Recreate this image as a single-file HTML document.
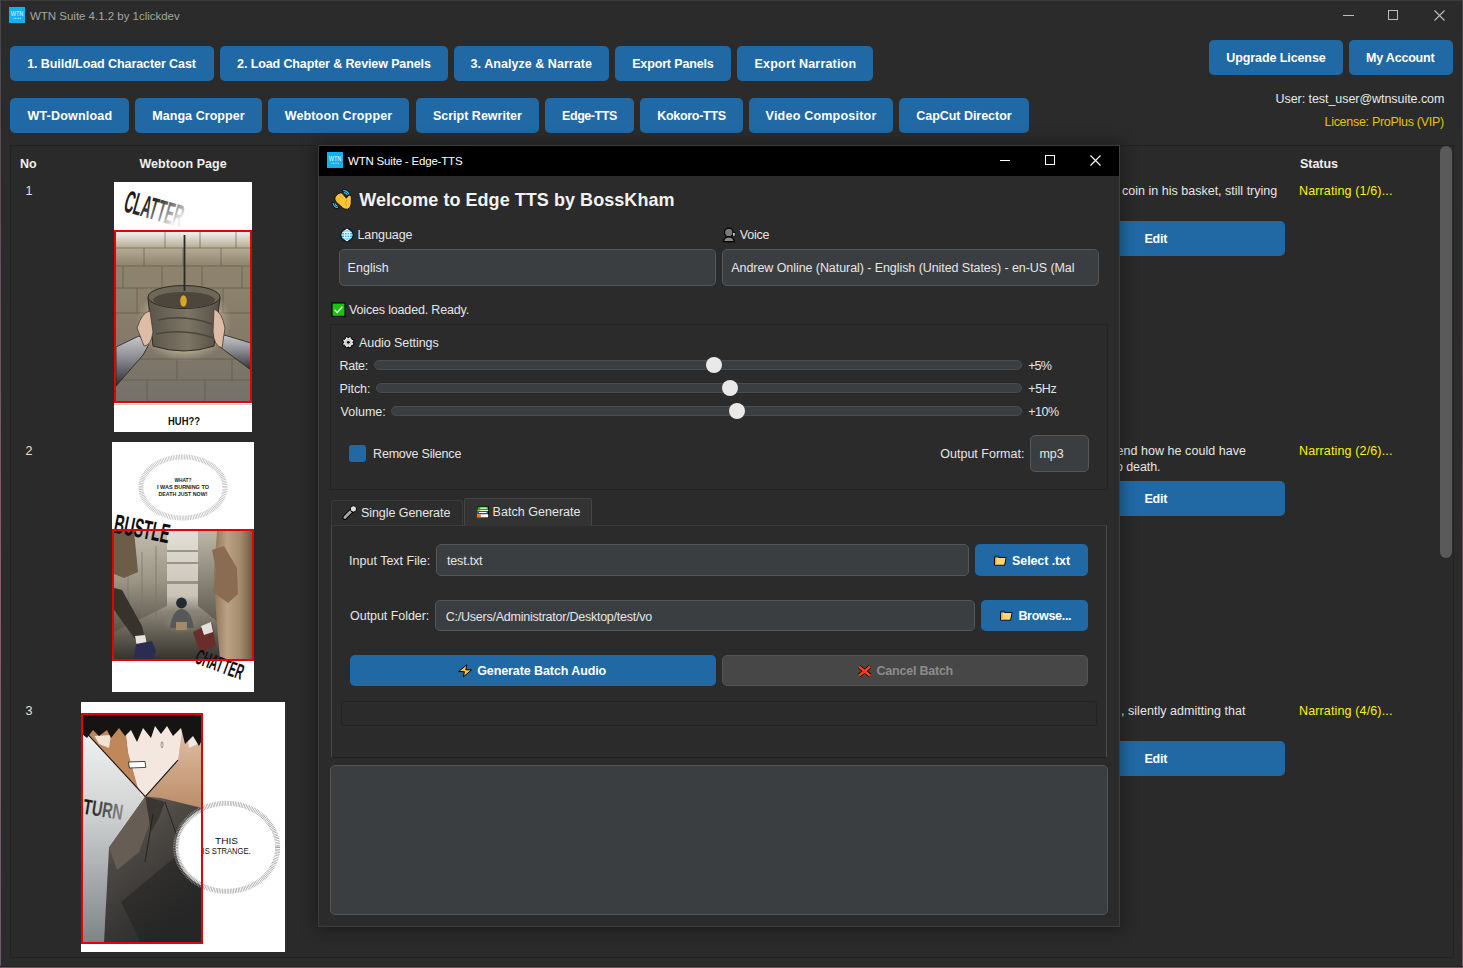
<!DOCTYPE html>
<html><head><meta charset="utf-8"><title>WTN Suite</title>
<style>
html,body{margin:0;padding:0;}
body{width:1463px;height:968px;overflow:hidden;position:relative;background:#2b2b2b;font-family:"Liberation Sans",sans-serif;}
.a{position:absolute;box-sizing:border-box;}
.btn{position:absolute;box-sizing:border-box;background:#2069a5;border-radius:5px;}
.inp{position:absolute;box-sizing:border-box;background:#3b3e41;border:1px solid #54575a;border-radius:5px;}
</style></head><body>
<div class="a" style="left:0;top:0;width:1463px;height:1px;background:#3a3a3a"></div>
<div class="a" style="left:0;top:0;width:1px;height:968px;background:linear-gradient(#45444a,#6a5060 30%,#905c6e 60%,#6a5a6a)"></div>
<div class="a" style="left:1462px;top:0;width:1px;height:968px;background:linear-gradient(#45444a,#5a4a55 40%,#7a5a6a)"></div>
<div class="a" style="left:0;top:966px;width:1463px;height:1px;background:#232323"></div><div class="a" style="left:0;top:967px;width:1463px;height:1px;background:#6e5866"></div>
<svg class="a" style="left:9px;top:7px" width="16" height="16"><rect width="16" height="16" fill="#12b1ee"/><text x="8" y="9.2" text-anchor="middle" font-family="Liberation Sans" font-size="6.5" fill="#e8f8ff" textLength="12.5" lengthAdjust="spacingAndGlyphs">WTN</text><path d="M4.5 11.3 H11.8" stroke="#d8f2fc" stroke-width="0.9" stroke-dasharray="0.9 0.7"/></svg>
<div style="position:absolute;top:10.68px;left:30.00px;font:normal 11.5px/11.5px 'Liberation Sans', sans-serif;color:#a4a4a4;white-space:nowrap;letter-spacing:-0.017px;">WTN Suite 4.1.2 by 1clickdev</div>
<div class="a" style="left:1343px;top:15px;width:11px;height:1px;background:#bdbdbd"></div>
<div class="a" style="left:1388px;top:10px;width:10px;height:10px;border:1px solid #bdbdbd"></div>
<svg class="a" style="left:1433px;top:9px" width="13" height="13"><path d="M1.5 1.5 L11.5 11.5 M11.5 1.5 L1.5 11.5" stroke="#bdbdbd" stroke-width="1.1"/></svg>
<div class="btn" style="left:10px;top:46px;width:204px;height:35px"></div>
<div style="position:absolute;top:58.19px;left:27.20px;font:bold 12.5px/12.5px 'Liberation Sans', sans-serif;color:#ffffff;white-space:nowrap;letter-spacing:-0.078px;">1. Build/Load Character Cast</div>
<div class="btn" style="left:220px;top:46px;width:228px;height:35px"></div>
<div style="position:absolute;top:58.19px;left:237.10px;font:bold 12.5px/12.5px 'Liberation Sans', sans-serif;color:#ffffff;white-space:nowrap;letter-spacing:-0.118px;">2. Load Chapter &amp; Review Panels</div>
<div class="btn" style="left:454px;top:46px;width:155px;height:35px"></div>
<div style="position:absolute;top:58.19px;left:470.60px;font:bold 12.5px/12.5px 'Liberation Sans', sans-serif;color:#ffffff;white-space:nowrap;letter-spacing:0.046px;">3. Analyze &amp; Narrate</div>
<div class="btn" style="left:615px;top:46px;width:116px;height:35px"></div>
<div style="position:absolute;top:58.19px;left:632.20px;font:bold 12.5px/12.5px 'Liberation Sans', sans-serif;color:#ffffff;white-space:nowrap;letter-spacing:-0.151px;">Export Panels</div>
<div class="btn" style="left:737px;top:46px;width:136px;height:35px"></div>
<div style="position:absolute;top:58.19px;left:754.55px;font:bold 12.5px/12.5px 'Liberation Sans', sans-serif;color:#ffffff;white-space:nowrap;letter-spacing:0.194px;">Export Narration</div>
<div class="btn" style="left:10px;top:98px;width:119px;height:35px"></div>
<div style="position:absolute;top:110.19px;left:27.45px;font:bold 12.5px/12.5px 'Liberation Sans', sans-serif;color:#ffffff;white-space:nowrap;letter-spacing:0.211px;">WT-Download</div>
<div class="btn" style="left:135px;top:98px;width:127px;height:35px"></div>
<div style="position:absolute;top:110.19px;left:152.20px;font:bold 12.5px/12.5px 'Liberation Sans', sans-serif;color:#ffffff;white-space:nowrap;letter-spacing:0.066px;">Manga Cropper</div>
<div class="btn" style="left:268px;top:98px;width:141px;height:35px"></div>
<div style="position:absolute;top:110.19px;left:284.70px;font:bold 12.5px/12.5px 'Liberation Sans', sans-serif;color:#ffffff;white-space:nowrap;letter-spacing:0.153px;">Webtoon Cropper</div>
<div class="btn" style="left:416px;top:98px;width:123px;height:35px"></div>
<div style="position:absolute;top:110.19px;left:432.95px;font:bold 12.5px/12.5px 'Liberation Sans', sans-serif;color:#ffffff;white-space:nowrap;letter-spacing:0.003px;">Script Rewriter</div>
<div class="btn" style="left:545px;top:98px;width:89px;height:35px"></div>
<div style="position:absolute;top:110.19px;left:562.05px;font:bold 12.5px/12.5px 'Liberation Sans', sans-serif;color:#ffffff;white-space:nowrap;letter-spacing:-0.442px;">Edge-TTS</div>
<div class="btn" style="left:640px;top:98px;width:103px;height:35px"></div>
<div style="position:absolute;top:110.19px;left:657.25px;font:bold 12.5px/12.5px 'Liberation Sans', sans-serif;color:#ffffff;white-space:nowrap;letter-spacing:-0.298px;">Kokoro-TTS</div>
<div class="btn" style="left:749px;top:98px;width:144px;height:35px"></div>
<div style="position:absolute;top:110.19px;left:765.60px;font:bold 12.5px/12.5px 'Liberation Sans', sans-serif;color:#ffffff;white-space:nowrap;letter-spacing:0.217px;">Video Compositor</div>
<div class="btn" style="left:899px;top:98px;width:130px;height:35px"></div>
<div style="position:absolute;top:110.19px;left:916.25px;font:bold 12.5px/12.5px 'Liberation Sans', sans-serif;color:#ffffff;white-space:nowrap;letter-spacing:-0.034px;">CapCut Director</div>
<div class="btn" style="left:1209px;top:40px;width:134px;height:35px"></div>
<div style="position:absolute;top:52.19px;left:1226.20px;font:bold 12.5px/12.5px 'Liberation Sans', sans-serif;color:#ffffff;white-space:nowrap;letter-spacing:-0.084px;">Upgrade License</div>
<div class="btn" style="left:1349px;top:40px;width:104px;height:35px"></div>
<div style="position:absolute;top:52.19px;left:1366.10px;font:bold 12.5px/12.5px 'Liberation Sans', sans-serif;color:#ffffff;white-space:nowrap;letter-spacing:-0.208px;">My Account</div>
<div style="position:absolute;top:93.09px;left:1275.50px;font:normal 12.5px/12.5px 'Liberation Sans', sans-serif;color:#e8e8e8;white-space:nowrap;letter-spacing:-0.055px;">User: test_user@wtnsuite.com</div>
<div style="position:absolute;top:116.39px;left:1324.50px;font:normal 12.5px/12.5px 'Liberation Sans', sans-serif;color:#e8c100;white-space:nowrap;letter-spacing:-0.290px;">License: ProPlus (VIP)</div>
<div class="a" style="left:10px;top:145px;width:1444px;height:813px;background:#2a2a2a;border:1px solid #222"></div>
<div style="position:absolute;top:158.19px;left:20.00px;font:bold 12.5px/12.5px 'Liberation Sans', sans-serif;color:#f0f0f0;white-space:nowrap;letter-spacing:0.073px;">No</div>
<div style="position:absolute;top:158.19px;left:139.40px;font:bold 12.5px/12.5px 'Liberation Sans', sans-serif;color:#f0f0f0;white-space:nowrap;letter-spacing:0.070px;">Webtoon Page</div>
<div style="position:absolute;top:158.19px;left:1300.00px;font:bold 12.5px/12.5px 'Liberation Sans', sans-serif;color:#f0f0f0;white-space:nowrap;letter-spacing:-0.050px;">Status</div>
<div class="a" style="left:1440px;top:146px;width:12px;height:412px;background:#5a5a5a;border-radius:6px"></div>
<div style="position:absolute;top:185.09px;left:25.50px;font:normal 12.5px/12.5px 'Liberation Sans', sans-serif;color:#e0e0e0;white-space:nowrap;letter-spacing:0.000px;">1</div>
<div style="position:absolute;top:445.09px;left:25.50px;font:normal 12.5px/12.5px 'Liberation Sans', sans-serif;color:#e0e0e0;white-space:nowrap;letter-spacing:0.000px;">2</div>
<div style="position:absolute;top:705.09px;left:25.50px;font:normal 12.5px/12.5px 'Liberation Sans', sans-serif;color:#e0e0e0;white-space:nowrap;letter-spacing:0.000px;">3</div>
<div style="position:absolute;top:185.09px;left:1299.00px;font:normal 12.5px/12.5px 'Liberation Sans', sans-serif;color:#f8f400;white-space:nowrap;letter-spacing:0.139px;">Narrating (1/6)...</div>
<div style="position:absolute;top:445.09px;left:1299.00px;font:normal 12.5px/12.5px 'Liberation Sans', sans-serif;color:#f8f400;white-space:nowrap;letter-spacing:0.139px;">Narrating (2/6)...</div>
<div style="position:absolute;top:705.09px;left:1299.00px;font:normal 12.5px/12.5px 'Liberation Sans', sans-serif;color:#f8f400;white-space:nowrap;letter-spacing:0.139px;">Narrating (4/6)...</div>
<div class="btn" style="left:1028px;top:221px;width:257px;height:35px"></div>
<div style="position:absolute;top:233.39px;left:1144.50px;font:bold 12.5px/12.5px 'Liberation Sans', sans-serif;color:#ffffff;white-space:nowrap;letter-spacing:-0.249px;">Edit</div>
<div class="btn" style="left:1028px;top:481px;width:257px;height:35px"></div>
<div style="position:absolute;top:493.39px;left:1144.50px;font:bold 12.5px/12.5px 'Liberation Sans', sans-serif;color:#ffffff;white-space:nowrap;letter-spacing:-0.249px;">Edit</div>
<div class="btn" style="left:1028px;top:741px;width:257px;height:35px"></div>
<div style="position:absolute;top:753.39px;left:1144.50px;font:bold 12.5px/12.5px 'Liberation Sans', sans-serif;color:#ffffff;white-space:nowrap;letter-spacing:-0.249px;">Edit</div>
<div style="position:absolute;top:185.09px;left:1122.10px;font:normal 12.5px/12.5px 'Liberation Sans', sans-serif;color:#e6e6e6;white-space:nowrap;letter-spacing:0.007px;">coin in his basket, still trying</div>
<div style="position:absolute;top:445.09px;left:1116.50px;font:normal 12.5px/12.5px 'Liberation Sans', sans-serif;color:#e6e6e6;white-space:nowrap;letter-spacing:0.044px;">end how he could have</div>
<div style="position:absolute;top:460.59px;left:1116.00px;font:normal 12.5px/12.5px 'Liberation Sans', sans-serif;color:#e6e6e6;white-space:nowrap;letter-spacing:-0.101px;">o death.</div>
<div style="position:absolute;top:705.09px;left:1121.00px;font:normal 12.5px/12.5px 'Liberation Sans', sans-serif;color:#e6e6e6;white-space:nowrap;letter-spacing:0.033px;">, silently admitting that</div>
<svg class="a" style="left:114px;top:182px" width="138" height="250" viewBox="0 0 138 250">
<defs>
<linearGradient id="st1" x1="0" y1="0" x2="0" y2="1">
<stop offset="0" stop-color="#f2f1ec"/><stop offset="0.09" stop-color="#b8ae98"/><stop offset="0.2" stop-color="#8e846e"/><stop offset="0.6" stop-color="#857b68"/><stop offset="1" stop-color="#74716a"/>
</linearGradient>
<radialGradient id="halo1" cx="0.5" cy="0.5" r="0.5"><stop offset="0.6" stop-color="#e4dcbc" stop-opacity="0.85"/><stop offset="1" stop-color="#b0a486" stop-opacity="0"/></radialGradient>
<linearGradient id="bask1" x1="0" y1="0" x2="1" y2="0"><stop offset="0" stop-color="#5a544a"/><stop offset="0.55" stop-color="#7c7464"/><stop offset="1" stop-color="#544f46"/></linearGradient>
<linearGradient id="clat" x1="0" y1="0" x2="1" y2="0.5"><stop offset="0" stop-color="#0c0c0c"/><stop offset="0.5" stop-color="#2a2a2a"/><stop offset="0.8" stop-color="#9a9a9a"/><stop offset="1" stop-color="#eee"/></linearGradient>
<linearGradient id="slvL" x1="0" y1="0" x2="0" y2="1"><stop offset="0" stop-color="#c8c8cc"/><stop offset="0.45" stop-color="#8a8a90"/><stop offset="1" stop-color="#2e2e32"/></linearGradient>
</defs>
<rect width="138" height="250" fill="#fff"/>
<g transform="translate(16 2.5) rotate(16)"><text x="0" y="22" font-family="Liberation Sans" font-weight="bold" font-size="25" fill="url(#clat)" textLength="60" lengthAdjust="spacingAndGlyphs" transform="scale(1 1.25)">CLATTER</text></g>
<rect x="0" y="222" width="138" height="1" fill="#c8c8c8"/>
<text x="70" y="243" text-anchor="middle" font-family="Liberation Sans" font-weight="bold" font-size="10.5" fill="#111" textLength="32" lengthAdjust="spacingAndGlyphs">HUH??</text>
<rect x="2" y="50" width="134" height="170" fill="url(#st1)"/>
<g stroke="#5a5446" stroke-width="0.9" opacity="0.65" fill="none">
<path d="M2 66 H136 M2 84 H136 M2 106 H136 M2 131 H136 M2 177 H136 M2 198 H136"/>
<path d="M51 50 V66 M86 50 V66 M122 50 V66 M30 66 V84 M69 66 V84 M107 66 V84 M9 84 V106 M48 84 V106 M88 84 V106 M128 84 V106 M23 106 V131 M109 106 V131 M63 177 V198 M118 177 V198 M33 198 V219 M91 198 V219"/>
</g>
<ellipse cx="70" cy="140" rx="48" ry="40" fill="url(#halo1)"/>
<path d="M34 116 L39 164 Q70 174 100 164 L106 116 Z" fill="url(#bask1)" stroke="#2e2a24" stroke-width="1"/>
<ellipse cx="70" cy="115" rx="36" ry="11.5" fill="#6e6758" stroke="#2e2a24" stroke-width="1"/>
<ellipse cx="70" cy="118" rx="31" ry="8" fill="#4c463c"/>
<path d="M44 138 Q70 132 98 142 M42 152 Q70 146 100 156" stroke="#4a463c" stroke-width="1.4" fill="none"/>
<rect x="69.6" y="53" width="1.8" height="56" fill="#2a2a2a"/>
<ellipse cx="69.5" cy="119" rx="3.6" ry="6" fill="#d6a62c" stroke="#5a4410" stroke-width="0.6"/>
<path d="M2 165 L25 154 L35 162 L29 173 L2 204 Z" fill="url(#slvL)" stroke="#222" stroke-width="0.8"/>
<path d="M23 146 Q28 130 36 129 L39 150 Q37 164 30 164 Z" fill="#dcbca4" stroke="#4a3a30" stroke-width="0.8"/>
<path d="M137 161 L110 153 L106 165 L137 188 Z" fill="url(#slvL)" stroke="#222" stroke-width="0.8"/>
<path d="M100 127 Q108 130 111 146 L108 166 Q100 164 99 150 Z" fill="#dcbca4" stroke="#4a3a30" stroke-width="0.8"/>
</svg>
<div class="a" style="left:114px;top:230px;width:138px;height:173px;border:2px solid #e80000"></div>
<svg class="a" style="left:112px;top:442px" width="142" height="250" viewBox="0 0 142 250">
<defs>
<linearGradient id="fog2" x1="0" y1="0" x2="0" y2="1"><stop offset="0" stop-color="#e2dfd6"/><stop offset="0.5" stop-color="#c8c3b6"/><stop offset="0.62" stop-color="#8a8578"/><stop offset="1" stop-color="#34322c"/></linearGradient>
<linearGradient id="wallL" x1="0" y1="0" x2="0" y2="1"><stop offset="0" stop-color="#c2bcae"/><stop offset="0.5" stop-color="#9a9484"/><stop offset="1" stop-color="#56524a"/></linearGradient>
<linearGradient id="wallR" x1="0" y1="0" x2="0" y2="1"><stop offset="0" stop-color="#bdb7a8"/><stop offset="1" stop-color="#5e5a50"/></linearGradient>
<linearGradient id="cloak" x1="0" y1="0" x2="1" y2="0"><stop offset="0" stop-color="#8e7558"/><stop offset="0.35" stop-color="#bca284"/><stop offset="0.7" stop-color="#a48a6c"/><stop offset="1" stop-color="#6e5c48"/></linearGradient>
<radialGradient id="glow2" cx="0.5" cy="0.4" r="0.5"><stop offset="0" stop-color="#8c8676" stop-opacity="0.9"/><stop offset="1" stop-color="#8c8676" stop-opacity="0"/></radialGradient>
</defs>
<rect width="142" height="250" fill="#fff"/>
<ellipse cx="71" cy="45.5" rx="42" ry="30.5" fill="none" stroke="#a8a8a8" stroke-width="5" stroke-dasharray="0.7 0.9" opacity="0.8"/>
<g font-family="Liberation Sans" font-weight="bold" font-size="6.2" fill="#222" text-anchor="middle">
<text x="71" y="39.5" textLength="17" lengthAdjust="spacingAndGlyphs">WHAT?</text><text x="71" y="46.8" textLength="52" lengthAdjust="spacingAndGlyphs">I WAS BURNING TO</text><text x="71" y="54.1" textLength="49" lengthAdjust="spacingAndGlyphs">DEATH JUST NOW!</text></g>
<rect x="2" y="89" width="138" height="129" fill="url(#fog2)"/>
<path d="M2 89 L55 89 L55 164 L2 190 Z" fill="url(#wallL)"/>
<path d="M86 89 L106 89 L106 180 L86 164 Z" fill="url(#wallR)"/>
<path d="M55 108 H86 V110 H55 Z M55 120 H86 V122 H55 Z M55 139 H86 V142 H55 Z" fill="#8a8474" opacity="0.8"/>
<path d="M30 110 V186 M44 104 V176 M16 112 V190" stroke="#7a7466" stroke-width="1.2" opacity="0.6"/>
<ellipse cx="70" cy="182" rx="20" ry="12" fill="url(#glow2)"/>
<path d="M2 89 L22 89 L26 130 L12 136 L2 132 Z" fill="#6c5c48"/>
<path d="M2 146 L10 148 L30 184 L33 197 L25 200 L2 168 Z" fill="#37322b"/>
<path d="M23 194 L33 193 L35 203 L25 205 Z" fill="#e8e4dc"/>
<path d="M24 202 L40 199 L44 210 L40 217 L22 217 Z" fill="#2a2c50"/>
<path d="M105 89 L140 89 L140 218 L108 218 L104 170 L102 130 Z" fill="url(#cloak)"/>
<path d="M100 108 L112 104 L125 126 L126 152 L116 161 L101 150 L104 128 Z" fill="#8a6c52"/>
<path d="M81 190 L100 181 L104 204 L88 211 Z" fill="#6a2e2a"/>
<path d="M89 184 L99 180 L101 190 L92 193 Z" fill="#e4e0da"/>
<circle cx="69.5" cy="161" r="5.4" fill="#262a34"/>
<path d="M58 186 Q60 168 69.5 167 Q79 168 82 186 Z" fill="#56585c"/>
<rect x="64" y="180" width="11" height="8" fill="#a08a68"/>
<g transform="translate(6 64) rotate(11)"><text x="0" y="20" font-family="Liberation Sans" font-weight="bold" font-size="20" fill="#0e0e0e" textLength="56" lengthAdjust="spacingAndGlyphs" transform="scale(1 1.35)">BUSTLE</text></g>
<g transform="translate(90 198) rotate(20)"><text x="0" y="18" font-family="Liberation Sans" font-weight="bold" font-size="16" fill="#111" textLength="50" lengthAdjust="spacingAndGlyphs" transform="scale(1 1.35)">CHATTER</text></g>
</svg>
<div class="a" style="left:112px;top:529px;width:142px;height:132px;border:2px solid #e80000"></div>
<svg class="a" style="left:81px;top:702px" width="204" height="250" viewBox="0 0 204 250">
<defs>
<linearGradient id="bg3" x1="0" y1="0" x2="0" y2="1"><stop offset="0" stop-color="#f8f8f8"/><stop offset="0.4" stop-color="#d4d6d6"/><stop offset="1" stop-color="#7e8386"/></linearGradient>
<linearGradient id="shirt3" x1="0" y1="0" x2="0.5" y2="1"><stop offset="0" stop-color="#70675c"/><stop offset="0.4" stop-color="#4c4844"/><stop offset="1" stop-color="#2c2c2c"/></linearGradient>
<radialGradient id="bub3" cx="0.5" cy="0.5" r="0.5"><stop offset="0.8" stop-color="#fff"/><stop offset="0.9" stop-color="#bdbdbd"/><stop offset="0.97" stop-color="#e6e6e6"/><stop offset="1" stop-color="#fff"/></radialGradient>
<linearGradient id="turn" x1="0" y1="0" x2="1" y2="0"><stop offset="0" stop-color="#111"/><stop offset="1" stop-color="#888"/></linearGradient>
<linearGradient id="neck3" x1="0" y1="0" x2="0" y2="1"><stop offset="0" stop-color="#e8c8b0"/><stop offset="1" stop-color="#b88a66"/></linearGradient>
</defs>
<rect width="204" height="250" fill="#fff"/>
<rect x="1" y="11" width="120" height="231" fill="url(#bg3)"/>
<path d="M58 12 L121 12 L121 112 L92 104 L64.3 94.6 Z" fill="url(#neck3)"/>
<path d="M104 14 L121 14 L121 40 L108 46 Z" fill="#f0e8e2"/>
<path d="M1.4 22 L44 22 L47.4 51 L59.4 94.6 L64.3 94.6 L6.3 31.8 L1.4 30 Z" fill="#bf875a"/>
<path d="M44 22 L102 22 L97 58 L64.3 94.6 L59.4 94.6 L47.4 51 Z" fill="#f3e7df"/>
<path d="M13.5 34 L30 33 L28 46 L18 42 Z" fill="#f2e2d4"/>
<path d="M6.3 31.8 L64.3 94.6 L97 58" stroke="#141414" stroke-width="1.1" fill="none"/>
<path d="M1 11 L121 11 L121 38 L118 44 L112 34 L104 42 L100 26 L92 34 L86 24 L80 32 L74 24 L70 36 L62 26 L56 40 L50 28 L44 34 L38 26 L30 36 L26 28 L18 34 L12 28 L6 36 L1 32 Z" fill="#161412"/>
<path d="M23 241 L28 145.4 L64.3 94.6 L80 96 L121 106 L121 241 Z" fill="url(#shirt3)"/>
<path d="M28 145.4 L64.3 94.6 L72 112 L58 150 L36 168 Z" fill="#665e54"/>
<path d="M64.3 94.6 L70 130 L78 116 L84 100 Z" fill="#3a3632"/>
<path d="M40 200 L100 150 L121 160 L121 241 L60 241 Z" fill="#202020" opacity="0.5"/>
<path d="M72 112 L64 160 M84 100 L98 140" stroke="#1a1a1a" stroke-width="0.8" fill="none"/>
<path d="M47.4 60 L64 59.4 L64.8 65.4 L48.4 66 Z" fill="#fff" stroke="#1e1e1e" stroke-width="0.8"/>
<path d="M80.5 40 Q79 44 81 46 Q83 44 81.6 40 Z" fill="none" stroke="#777" stroke-width="0.7"/>
<g transform="translate(5 88) rotate(9)"><text x="0" y="20" font-family="Liberation Sans" font-weight="bold" font-size="18" fill="url(#turn)" textLength="40" lengthAdjust="spacingAndGlyphs" transform="scale(1 1.2)">TURN</text></g>
<ellipse cx="145.6" cy="145.3" rx="51" ry="44" fill="#fff" stroke="#9a9a9a" stroke-width="5" stroke-dasharray="0.7 0.9" opacity="0.9"/><ellipse cx="145.6" cy="145.3" rx="47.5" ry="40.5" fill="#fff"/>
<g font-family="Liberation Sans" font-size="8.6" fill="#111" text-anchor="middle"><text x="145.6" y="141.6" textLength="23" lengthAdjust="spacingAndGlyphs">THIS</text><text x="145.6" y="152.4" textLength="48" lengthAdjust="spacingAndGlyphs">IS STRANGE.</text></g>
</svg>
<div class="a" style="left:81px;top:713px;width:122px;height:231px;border:2px solid #e80000"></div>
<div class="a" style="left:318px;top:145px;width:802px;height:782px;background:#2b2b2b;border:1px solid #3c3c3c;box-shadow:0 0 14px 2px rgba(0,0,0,0.35)"></div>
<div class="a" style="left:319px;top:146px;width:800px;height:30px;background:#000"></div>
<svg class="a" style="left:327px;top:152px" width="16" height="16"><rect width="16" height="16" fill="#12b1ee"/><text x="8" y="9.2" text-anchor="middle" font-family="Liberation Sans" font-size="6.5" fill="#e8f8ff" textLength="12.5" lengthAdjust="spacingAndGlyphs">WTN</text><path d="M4.5 11.3 H11.8" stroke="#d8f2fc" stroke-width="0.9" stroke-dasharray="0.9 0.7"/></svg>
<div style="position:absolute;top:155.78px;left:348.00px;font:normal 11.5px/11.5px 'Liberation Sans', sans-serif;color:#ffffff;white-space:nowrap;letter-spacing:-0.192px;">WTN Suite - Edge-TTS</div>
<div class="a" style="left:1000px;top:160px;width:10px;height:1px;background:#fff"></div>
<div class="a" style="left:1045px;top:155px;width:10px;height:10px;border:1px solid #fff"></div>
<svg class="a" style="left:1089px;top:154px" width="13" height="13"><path d="M1.5 1.5 L11.5 11.5 M11.5 1.5 L1.5 11.5" stroke="#fff" stroke-width="1.1"/></svg>
<div style="position:absolute;top:190.61px;left:359.30px;font:bold 18px/18px 'Liberation Sans', sans-serif;color:#f2f2f2;white-space:nowrap;letter-spacing:0.049px;">Welcome to Edge TTS by BossKham</div>
<div style="position:absolute;top:229.29px;left:357.50px;font:normal 12.5px/12.5px 'Liberation Sans', sans-serif;color:#e6e6e6;white-space:nowrap;letter-spacing:-0.095px;">Language</div>
<div style="position:absolute;top:229.29px;left:739.80px;font:normal 12.5px/12.5px 'Liberation Sans', sans-serif;color:#e6e6e6;white-space:nowrap;letter-spacing:-0.207px;">Voice</div>
<div class="inp" style="left:339px;top:249px;width:377px;height:37px"></div>
<div style="position:absolute;top:262.09px;left:347.60px;font:normal 12.5px/12.5px 'Liberation Sans', sans-serif;color:#e6e6e6;white-space:nowrap;letter-spacing:0.026px;">English</div>
<div class="inp" style="left:722px;top:249px;width:377px;height:37px"></div>
<div style="position:absolute;top:262.09px;left:731.30px;font:normal 12.5px/12.5px 'Liberation Sans', sans-serif;color:#e6e6e6;white-space:nowrap;letter-spacing:-0.068px;">Andrew Online (Natural) - English (United States) - en-US (Mal</div>
<div style="position:absolute;top:304.09px;left:349.00px;font:normal 12.5px/12.5px 'Liberation Sans', sans-serif;color:#e6e6e6;white-space:nowrap;letter-spacing:-0.164px;">Voices loaded. Ready.</div>
<div class="a" style="left:330px;top:324px;width:778px;height:166px;border:1px solid #232323"></div>
<div style="position:absolute;top:337.29px;left:359.10px;font:normal 12.5px/12.5px 'Liberation Sans', sans-serif;color:#e6e6e6;white-space:nowrap;letter-spacing:-0.081px;">Audio Settings</div>
<div style="position:absolute;top:359.59px;left:339.50px;font:normal 12.5px/12.5px 'Liberation Sans', sans-serif;color:#e6e6e6;white-space:nowrap;letter-spacing:-0.276px;">Rate:</div>
<div class="a" style="left:374px;top:360px;width:648px;height:10px;background:#3b3e41;border:1px solid #4a4d50;border-radius:5px"></div>
<div class="a" style="left:706px;top:357px;width:16px;height:16px;background:#e9e9e9;border-radius:50%"></div>
<div style="position:absolute;top:359.59px;left:1028.20px;font:normal 12.5px/12.5px 'Liberation Sans', sans-serif;color:#e6e6e6;white-space:nowrap;letter-spacing:-0.876px;">+5%</div>
<div style="position:absolute;top:382.59px;left:339.50px;font:normal 12.5px/12.5px 'Liberation Sans', sans-serif;color:#e6e6e6;white-space:nowrap;letter-spacing:-0.058px;">Pitch:</div>
<div class="a" style="left:376px;top:383px;width:646px;height:10px;background:#3b3e41;border:1px solid #4a4d50;border-radius:5px"></div>
<div class="a" style="left:721.6px;top:380px;width:16px;height:16px;background:#e9e9e9;border-radius:50%"></div>
<div style="position:absolute;top:382.59px;left:1028.20px;font:normal 12.5px/12.5px 'Liberation Sans', sans-serif;color:#e6e6e6;white-space:nowrap;letter-spacing:-0.293px;">+5Hz</div>
<div style="position:absolute;top:405.59px;left:340.50px;font:normal 12.5px/12.5px 'Liberation Sans', sans-serif;color:#e6e6e6;white-space:nowrap;letter-spacing:0.018px;">Volume:</div>
<div class="a" style="left:391px;top:406px;width:631px;height:10px;background:#3b3e41;border:1px solid #4a4d50;border-radius:5px"></div>
<div class="a" style="left:728.7px;top:403px;width:16px;height:16px;background:#e9e9e9;border-radius:50%"></div>
<div style="position:absolute;top:405.59px;left:1028.20px;font:normal 12.5px/12.5px 'Liberation Sans', sans-serif;color:#e6e6e6;white-space:nowrap;letter-spacing:-0.501px;">+10%</div>
<div class="a" style="left:349px;top:445px;width:17px;height:17px;background:#2069a5;border-radius:3px"></div>
<div style="position:absolute;top:447.99px;left:373.10px;font:normal 12.5px/12.5px 'Liberation Sans', sans-serif;color:#e6e6e6;white-space:nowrap;letter-spacing:-0.213px;">Remove Silence</div>
<div style="position:absolute;top:447.99px;left:940.30px;font:normal 12.5px/12.5px 'Liberation Sans', sans-serif;color:#e6e6e6;white-space:nowrap;letter-spacing:0.001px;">Output Format:</div>
<div class="inp" style="left:1030px;top:435px;width:59px;height:37px"></div>
<div style="position:absolute;top:447.99px;left:1039.40px;font:normal 12.5px/12.5px 'Liberation Sans', sans-serif;color:#e6e6e6;white-space:nowrap;letter-spacing:0.018px;">mp3</div>
<div class="a" style="left:331px;top:525px;width:776px;height:233px;border:1px solid #3a3a3a;border-left-color:#474747;border-right-color:#4a4a4a;border-bottom-color:#1f1f1f"></div>
<div class="a" style="left:331px;top:500px;width:132px;height:25px;background:#2d2d2d;border:1px solid #3a3a3a;border-bottom:none;border-radius:3px 3px 0 0"></div>
<div class="a" style="left:464px;top:498px;width:128px;height:28px;background:#333;border:1px solid #454545;border-bottom:none;border-radius:3px 3px 0 0"></div>
<div style="position:absolute;top:506.99px;left:361.00px;font:normal 12.5px/12.5px 'Liberation Sans', sans-serif;color:#e6e6e6;white-space:nowrap;letter-spacing:-0.070px;">Single Generate</div>
<div style="position:absolute;top:506.49px;left:492.60px;font:normal 12.5px/12.5px 'Liberation Sans', sans-serif;color:#e6e6e6;white-space:nowrap;letter-spacing:0.031px;">Batch Generate</div>
<div style="position:absolute;top:555.39px;left:349.10px;font:normal 12.5px/12.5px 'Liberation Sans', sans-serif;color:#e6e6e6;white-space:nowrap;letter-spacing:-0.001px;">Input Text File:</div>
<div class="inp" style="left:436px;top:544px;width:533px;height:32px"></div>
<div style="position:absolute;top:555.39px;left:447.10px;font:normal 12.5px/12.5px 'Liberation Sans', sans-serif;color:#e6e6e6;white-space:nowrap;letter-spacing:-0.206px;">test.txt</div>
<div class="btn" style="left:975px;top:544px;width:113px;height:32px"></div>
<div style="position:absolute;top:555.09px;left:1012.10px;font:bold 12.5px/12.5px 'Liberation Sans', sans-serif;color:#fff;white-space:nowrap;letter-spacing:-0.109px;">Select .txt</div>
<div style="position:absolute;top:610.39px;left:350.10px;font:normal 12.5px/12.5px 'Liberation Sans', sans-serif;color:#e6e6e6;white-space:nowrap;letter-spacing:-0.056px;">Output Folder:</div>
<div class="inp" style="left:435px;top:600px;width:540px;height:31px"></div>
<div style="position:absolute;top:610.59px;left:445.80px;font:normal 12.5px/12.5px 'Liberation Sans', sans-serif;color:#e6e6e6;white-space:nowrap;letter-spacing:-0.243px;">C:/Users/Administrator/Desktop/test/vo</div>
<div class="btn" style="left:981px;top:600px;width:107px;height:31px"></div>
<div style="position:absolute;top:610.29px;left:1018.40px;font:bold 12.5px/12.5px 'Liberation Sans', sans-serif;color:#fff;white-space:nowrap;letter-spacing:-0.300px;">Browse...</div>
<div class="btn" style="left:350px;top:655px;width:366px;height:31px"></div>
<div style="position:absolute;top:665.19px;left:477.20px;font:bold 12.5px/12.5px 'Liberation Sans', sans-serif;color:#fff;white-space:nowrap;letter-spacing:-0.092px;">Generate Batch Audio</div>
<div class="a" style="left:722px;top:655px;width:366px;height:31px;background:#474747;border:1px solid #555;border-radius:5px"></div>
<div style="position:absolute;top:665.19px;left:876.50px;font:bold 12.5px/12.5px 'Liberation Sans', sans-serif;color:#8c8c8c;white-space:nowrap;letter-spacing:-0.223px;">Cancel Batch</div>
<div class="a" style="left:341px;top:701px;width:756px;height:25px;border:1px solid #222;border-radius:3px"></div>
<div class="inp" style="left:330px;top:765px;width:778px;height:150px;border-color:#555"></div>
<svg class="a" style="left:328px;top:185px;overflow:visible" width="30" height="30" viewBox="0 0 30 30">
<path d="M15.6 5.6 Q19.4 5.8 21 9.2" stroke="#0a0a0a" stroke-width="2.8" fill="none" stroke-linecap="round"/>
<path d="M15.6 5.6 Q19.4 5.8 21 9.2 M16.4 7.6 Q18.4 7.8 19.2 9.4" stroke="#36c4f2" stroke-width="1.1" fill="none" stroke-linecap="round"/>
<path d="M5.2 18.4 Q6 22.2 9.8 22.8" stroke="#0a0a0a" stroke-width="2.8" fill="none" stroke-linecap="round"/>
<path d="M5.2 18.4 Q6 22.2 9.8 22.8 M7.2 18.8 Q7.6 20.6 9.2 21" stroke="#36c4f2" stroke-width="1.1" fill="none" stroke-linecap="round"/>
<path d="M7.1 14.6 Q6.6 12.6 7.6 11.4 Q8.2 9.8 9.6 9.4 Q10.8 8 12.4 7.9 Q13.8 7.8 14.6 8.8 L18.4 13.2 L20 10.8 Q21 9.8 22.2 10.2 Q23.4 11 23.4 13.4 L23.2 19 Q22.8 23.2 19.6 24.2 Q16.8 24.6 14.8 23 L8.2 17 Q7.2 16 7.1 14.6 Z" fill="#fcc43a" stroke="#0a0a0a" stroke-width="0.9"/>
<path d="M10.4 9.4 L15 13.6 M8.2 11.2 L13 15.6 M7.3 13.6 L11.6 17.4" stroke="#e0a01a" stroke-width="0.8" fill="none"/>
<path d="M18.6 14.8 Q16.8 17.6 18.6 21" stroke="#e0a01a" stroke-width="1" fill="none"/>
</svg>
<svg class="a" style="left:340px;top:228px;overflow:visible" width="14" height="14" viewBox="0 0 14 14">
<circle cx="7" cy="7" r="6.2" fill="#2bb8f2" stroke="#0c0c0c" stroke-width="1.1"/>
<path d="M1.5 7 H12.5 M2.4 4.4 H11.6 M2.4 9.6 H11.6 M7 1 V13" stroke="#fff" stroke-width="0.9"/>
<ellipse cx="7" cy="7" rx="2.6" ry="5.8" stroke="#fff" stroke-width="0.9" fill="none"/>
</svg>
<svg class="a" style="left:718px;top:224px;overflow:visible" width="24" height="22" viewBox="0 0 24 22">
<path d="M5.6 17.6 Q6.2 13 10.8 13 Q15.4 13 16.2 17.6 Z" fill="#8a8a8a" stroke="#000" stroke-width="1.2"/>
<circle cx="10.8" cy="8.4" r="4.3" fill="#7a7a7a" stroke="#000" stroke-width="1.2"/>
<rect x="14.6" y="8.6" width="2.6" height="3.6" fill="#cfcfcf" stroke="#000" stroke-width="0.8"/>
</svg>
<svg class="a" style="left:331px;top:302px;overflow:visible" width="15" height="15" viewBox="0 0 15 15">
<rect x="1" y="1" width="13" height="13.4" fill="#16c60c" stroke="#0a0a0a" stroke-width="1.2"/>
<path d="M3.6 7.8 L6.2 10.4 L11.4 4.6" stroke="#fff" stroke-width="1.4" fill="none"/>
</svg>
<svg class="a" style="left:341.5px;top:336.2px;overflow:visible" width="13" height="13" viewBox="0 0 13 13">
<polygon points="10.96,6.91 12.06,7.58 11.28,9.47 10.03,9.16 9.16,10.03 9.47,11.28 7.58,12.06 6.91,10.96 5.69,10.96 5.02,12.06 3.13,11.28 3.44,10.03 2.57,9.16 1.32,9.47 0.54,7.58 1.64,6.91 1.64,5.69 0.54,5.02 1.32,3.13 2.57,3.44 3.44,2.57 3.13,1.32 5.02,0.54 5.69,1.64 6.91,1.64 7.58,0.54 9.47,1.32 9.16,2.57 10.03,3.44 11.28,3.13 12.06,5.02 10.96,5.69" fill="#e8e8e8" stroke="#000" stroke-width="1" stroke-linejoin="round"/>
<circle cx="6.3" cy="6.3" r="2.7" fill="none" stroke="#a0a0a0" stroke-width="0.6"/>
<circle cx="6.3" cy="6.3" r="1.4" fill="#000"/>
</svg>
<svg class="a" style="left:340px;top:500px;overflow:visible" width="24" height="24" viewBox="0 0 24 24">
<path d="M4.8 17.6 L11.4 10.8" stroke="#000" stroke-width="4.8" stroke-linecap="round"/>
<path d="M4.8 17.6 L11.4 10.8" stroke="#a8a8a8" stroke-width="2.8" stroke-linecap="round"/>
<circle cx="13.4" cy="8.9" r="3.2" fill="#dcdcdc" stroke="#000" stroke-width="1"/>
</svg>
<svg class="a" style="left:476px;top:505px;overflow:visible" width="14" height="14" viewBox="0 0 14 14">
<rect x="1.2" y="1.2" width="11.6" height="11.8" fill="#000"/>
<rect x="1.6" y="1.8" width="10.4" height="2.8" fill="#16b814"/>
<rect x="4.2" y="2.6" width="6.6" height="1.1" fill="#fff"/>
<rect x="1.6" y="4.8" width="10.6" height="1.2" fill="#f7f0e0"/>
<rect x="1.6" y="4.8" width="2.6" height="1.2" fill="#f2a800"/>
<rect x="1" y="6.2" width="10.8" height="2.6" fill="#1a6fc8"/>
<rect x="3" y="7" width="7.6" height="1" fill="#fff"/>
<rect x="1.2" y="9.2" width="11" height="3.2" fill="#fff"/>
<rect x="1.2" y="9.2" width="3.6" height="3.2" fill="#ff6a10"/>
</svg>
<svg class="a" style="left:993px;top:555px;overflow:visible" width="15" height="12" viewBox="0 0 15 12">
<path d="M1.2 2 Q1.4 0.8 2.6 0.8 L5.4 0.8 L6.6 2.2 L13.6 2.2 L12 10.6 L1.2 10.6 Z" fill="#000"/>
<rect x="2.2" y="1.6" width="3.4" height="1.2" fill="#5ab4f0"/>
<path d="M2 3 L12.6 3 L11.2 9.8 L2 9.8 Z" fill="#fdd67a"/>
<rect x="2" y="3" width="1.6" height="6.8" fill="#f2a800" opacity="0.8"/>
</svg>
<svg class="a" style="left:999px;top:610px;overflow:visible" width="15" height="12" viewBox="0 0 15 12">
<path d="M1.2 2 Q1.4 0.8 2.6 0.8 L5.4 0.8 L6.6 2.2 L13.6 2.2 L12 10.6 L1.2 10.6 Z" fill="#000"/>
<rect x="2.2" y="1.6" width="3.4" height="1.2" fill="#5ab4f0"/>
<path d="M2 3 L12.6 3 L11.2 9.8 L2 9.8 Z" fill="#fdd67a"/>
<rect x="2" y="3" width="1.6" height="6.8" fill="#f2a800" opacity="0.8"/>
</svg>
<svg class="a" style="left:454px;top:660px;overflow:visible" width="24" height="22" viewBox="0 0 24 22">
<path d="M12.8 4.8 L4.6 11.6 L10.4 11.6 L9.4 16.8 L17.6 9.8 L11.8 9.8 Z" fill="#fdc93a" stroke="#000" stroke-width="1" stroke-linejoin="round"/>
</svg>
<svg class="a" style="left:852px;top:660px;overflow:visible" width="24" height="22" viewBox="0 0 24 22">
<path d="M7.2 6.8 L18 15.4 M18 6.8 L7.2 15.4" stroke="#000" stroke-width="4"/>
<path d="M7.2 6.8 L18 15.4 M18 6.8 L7.2 15.4" stroke="#ff4019" stroke-width="2.6"/>
</svg>
</body></html>
